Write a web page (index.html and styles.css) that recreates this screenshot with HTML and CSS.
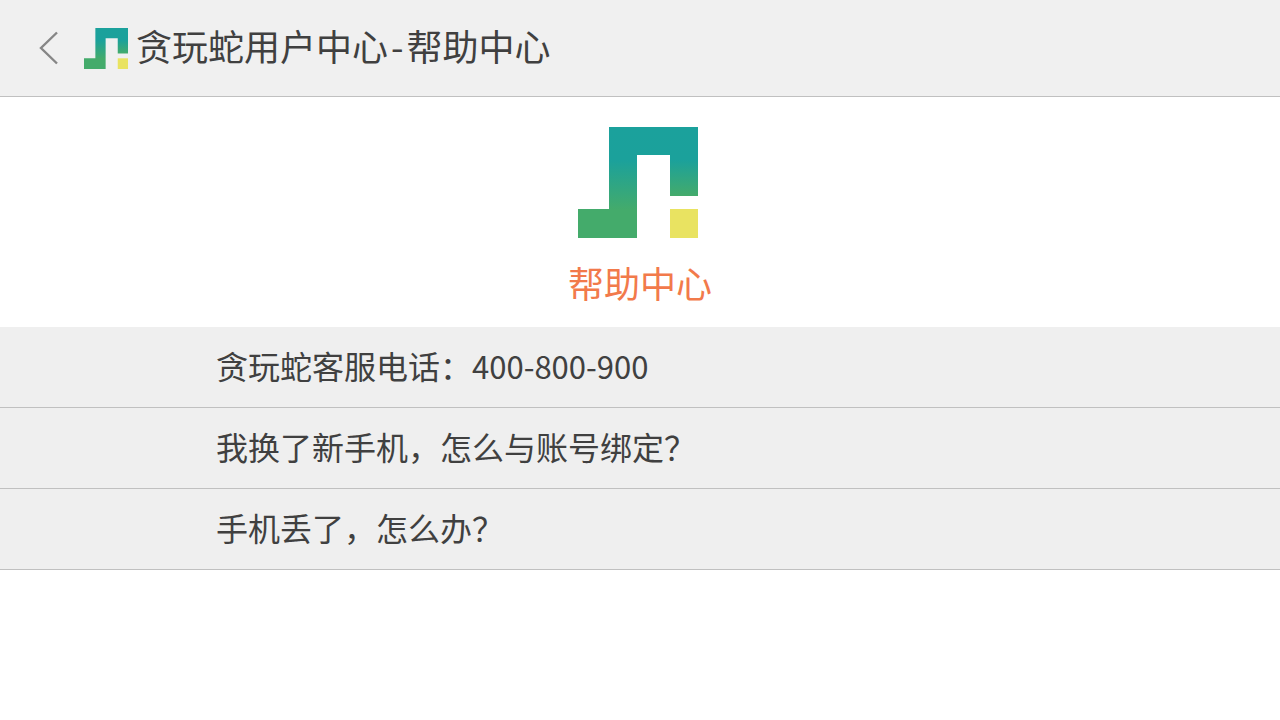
FILE: index.html
```html
<!DOCTYPE html>
<html lang="zh-CN">
<head>
<meta charset="utf-8">
<meta name="viewport" content="width=device-width, initial-scale=1">
<title>贪玩蛇用户中心-帮助中心</title>
<link rel="stylesheet" href="styles.css">
</head>
<body>
<header class="topbar">
  <button class="back" type="button" aria-label="返回">
    <svg width="20" height="34" viewBox="0 0 20 34" aria-hidden="true"><path d="M19 1.500L3 17L19 32.500" fill="none" stroke="#868686" stroke-width="2.400"/></svg>
  </button>
  <svg class="logo-small" viewBox="0 0 120 111" preserveAspectRatio="none" aria-hidden="true">
    <defs>
      <linearGradient id="snake" gradientUnits="userSpaceOnUse" x1="0" y1="0" x2="0" y2="111">
        <stop offset="0" stop-color="#1ba19c"/>
        <stop offset=".3" stop-color="#1ba19b"/>
        <stop offset=".75" stop-color="#44ab6b"/>
        <stop offset="1" stop-color="#44ab6b"/>
      </linearGradient>
      <linearGradient id="head" gradientUnits="userSpaceOnUse" x1="0" y1="0" x2="0" y2="69">
        <stop offset="0" stop-color="#1ba19c"/>
        <stop offset=".48" stop-color="#1ba19b"/>
        <stop offset="1" stop-color="#44ab6b"/>
      </linearGradient>
      <symbol id="mark" viewBox="0 0 120 111" preserveAspectRatio="none">
        <path d="M31 0H120V28H59V111H0V82H31Z" fill="url(#snake)"/>
        <path d="M92 20H120V69H92Z" fill="url(#head)"/>
        <path d="M92 82H120V111H92Z" fill="#e9e361"/>
      </symbol>
    </defs>
    <use href="#mark" width="120" height="111"/>
  </svg>
  <h1 class="title">贪玩蛇用户中心<span class="dash">-</span>帮助中心</h1>
</header>
<main>
  <section class="hero">
    <svg class="logo-large" viewBox="0 0 120 111" aria-hidden="true"><use href="#mark" width="120" height="111"/></svg>
    <h2 class="hero-title">帮助中心</h2>
  </section>
  <ul class="topics">
    <li class="topic"><a class="topic-link" href="tel:400800900">贪玩蛇客服电话：<span class="phone">400-800-900</span></a></li>
    <li class="topic"><a class="topic-link" href="#bind">我换了新手机，怎么与账号绑定？</a></li>
    <li class="topic"><a class="topic-link" href="#lost">手机丢了，怎么办？</a></li>
  </ul>
</main>
</body>
</html>
```
FILE: styles.css
```css
* {
  box-sizing: border-box;
}

body {
  margin: 0;
  background: #fff;
  color: #404040;
  font-family: "Noto Sans CJK SC", sans-serif;
}

.topbar {
  display: flex;
  align-items: center;
  min-height: 97px;
  padding: 0 38px;
  background: #f0f0f0;
  border-bottom: 1px solid #c0c0c0;
}

.back {
  display: flex;
  margin: 0 26px 0 0;
  padding: 0;
  border: 0;
  background: none;
  cursor: pointer;
}

.logo-small {
  width: 44px;
  height: 41px;
  margin-right: 8px;
}

.title,
.hero-title {
  margin: 0;
  font-size: 36px;
  font-weight: 400;
  line-height: 48px;
}

.title {
  padding-bottom: 6px;
}

.dash {
  padding: 0 3px;
}

.hero {
  display: flex;
  flex-direction: column;
  align-items: center;
  gap: 20px;
  padding: 30px 0 21px;
}

.logo-large {
  width: 120px;
  height: 111px;
  /* the mark is weighted to the left, so it sits just off the centre line */
  margin-right: 4px;
}

.hero-title {
  color: #f27a4b;
}

.topics {
  margin: 0;
  padding: 0;
  list-style: none;
}

.topic {
  background: #efefef;
  border-bottom: 1px solid #c0c0c0;
}

.topic-link {
  display: block;
  padding: 14px 24px 18px 216px;
  color: inherit;
  font-size: 32px;
  line-height: 48px;
  text-decoration: none;
}

.phone {
  font-size: 31px;
  line-height: 1;
}
```
